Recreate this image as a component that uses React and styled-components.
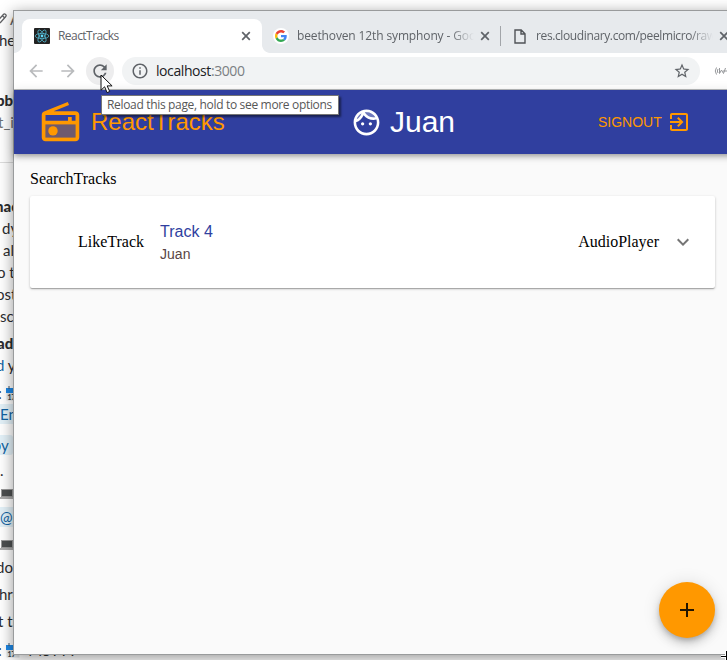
import React from "react";
import styled, { createGlobalStyle } from "styled-components";

const GlobalStyle = createGlobalStyle`
  * { box-sizing: border-box; }
  body { margin: 0; background: #fff; overflow: hidden; }
  svg { display: block; flex: none; }
`;

const Desktop = styled.div`
  position: relative;
  width: 727px;
  height: 660px;
  overflow: hidden;
  background: #fff;
`;

/* Chat page that lies behind the browser window */
const ChatColumn = styled.div`
  display: flex;
  flex-direction: column;
  width: 90px;
  font-family: Lato, sans-serif;
  font-size: 15px;
  color: #2c2d30;
`;

const ChatLine = styled.div`
  display: flex;
  align-items: center;
  flex: none;
  height: 20px;
  margin-top: ${(p) => p.$gap}px;
  margin-left: ${(p) => p.$shift || 0}px;
  line-height: 20px;
  white-space: pre;
  font-weight: ${(p) => (p.$bold ? 900 : 400)};
  color: ${(p) => p.$color || "inherit"};
`;

const Mention = styled.span`
  background: #e3f1f8;
  color: #1264a3;
  padding: 0 4px;
  margin-left: -6px;
  border-radius: 3px;
`;

const Faint = styled.span`
  color: #1264a3;
`;

const ChatDivider = styled.div`
  height: 1px;
  flex: none;
  margin: 30px 0 0;
  background: #ddd;
`;

const BrowserWindow = styled.div`
  position: absolute;
  left: 13px;
  top: 10px;
  width: 760px;
  height: 645px;
  display: flex;
  flex-direction: column;
  border: 1px solid #999b9c;
  background: #fafafa;
  box-shadow: 0 3px 14px rgba(0, 0, 0, 0.42);
`;

const TabStrip = styled.div`
  display: flex;
  flex: none;
  height: 42px;
  padding: 8px 0 0 8px;
  background: #e7eaed;
`;

const Tab = styled.div`
  position: relative;
  display: flex;
  align-items: center;
  flex: none;
  width: ${(p) => p.$width}px;
  height: 34px;
  padding-left: ${(p) => p.$pad || 12}px;
  border-radius: 8px 8px 0 0;
  background: ${(p) => (p.$active ? "#fff" : "transparent")};
`;

const Flare = styled.span`
  position: absolute;
  bottom: 0;
  ${(p) => p.$side}: -8px;
  width: 8px;
  height: 8px;
  background: radial-gradient(
    circle at ${(p) => p.$side} top,
    transparent 7.5px,
    #fff 8.2px
  );
`;

const TabTitle = styled.span`
  flex: none;
  width: ${(p) => p.$width}px;
  margin-left: ${(p) => p.$gap}px;
  margin-right: ${(p) => p.$end || 0}px;
  overflow: hidden;
  white-space: nowrap;
  font: 12px/18px "Open Sans", sans-serif;
  letter-spacing: ${(p) => p.$track || 0}px;
  color: #5f6368;
  ${(p) =>
    p.$fade &&
    "mask-image: linear-gradient(to right, #000 calc(100% - 24px), transparent);"}
`;

const TabDivider = styled.span`
  flex: none;
  width: 1px;
  height: 20px;
  margin-top: 7px;
  background: #a2a5a9;
`;

const Toolbar = styled.div`
  display: flex;
  align-items: center;
  flex: none;
  height: 37px;
  padding-left: 12px;
  border-bottom: 1px solid #b9bbbc;
  background: #fff;
`;

const NavIcon = styled.div`
  display: flex;
  width: 18px;
  margin-right: 14px;
`;

const ReloadButton = styled.div`
  display: flex;
  align-items: center;
  justify-content: center;
  width: 28px;
  height: 28px;
  margin-left: -4px;
  border-radius: 50%;
  background: #ededee;
`;

const AddressBar = styled.div`
  display: flex;
  align-items: center;
  width: 578px;
  height: 28px;
  margin: 0 14px 0 8px;
  padding: 0 9px;
  border-radius: 14px;
  background: #f1f3f4;
`;

const Url = styled.span`
  flex: 1;
  margin-left: 7px;
  font: 14px/20px "Open Sans", sans-serif;
  letter-spacing: -0.42px;
  color: #202124;
`;

const Port = styled.span`
  color: #7b7f83;
`;

const AppHeader = styled.header`
  display: flex;
  align-items: center;
  flex: none;
  height: 64px;
  padding-left: 24px;
  background: #303f9f;
  color: #ff9800;
  font-family: "Liberation Sans", Arial, sans-serif;
  box-shadow: 0 2px 4px -1px rgba(0, 0, 0, 0.2),
    0 4px 5px 0 rgba(0, 0, 0, 0.14), 0 1px 10px 0 rgba(0, 0, 0, 0.12);
`;

const Brand = styled.div`
  display: flex;
  align-items: center;
  width: 313px;
  font-size: 24px;
  gap: 8px;
`;

const Profile = styled.div`
  display: flex;
  align-items: center;
  width: 247px;
  gap: 8px;
  font-size: 30px;
  color: #fff;
`;

const SignOut = styled.div`
  display: flex;
  align-items: center;
  gap: 5px;
  font-size: 14px;
`;

const Content = styled.main`
  padding: 16px;
  font: 16px/18px "Liberation Serif", "Times New Roman", serif;
  color: #000;
`;

const TrackCard = styled.div`
  display: flex;
  align-items: center;
  width: 685px;
  height: 92px;
  margin-top: 8px;
  padding: 0 20px 0 48px;
  border-radius: 2px;
  background: #fff;
  box-shadow: 0 1px 3px rgba(0, 0, 0, 0.2), 0 1px 1px rgba(0, 0, 0, 0.14),
    0 2px 1px -1px rgba(0, 0, 0, 0.12);
`;

const TrackInfo = styled.div`
  flex: 1;
  margin-left: 16px;
  font-family: "Liberation Sans", Arial, sans-serif;
`;

const TrackName = styled.div`
  font-size: 16px;
  line-height: 24px;
  color: #303f9f;
`;

const TrackAuthor = styled.div`
  font-size: 14px;
  line-height: 21px;
  color: #5a4544;
`;

const ExpandIcon = styled.div`
  margin-left: 12px;
`;

const AddButton = styled.div`
  position: absolute;
  left: 645px;
  top: 571px;
  width: 56px;
  height: 56px;
  display: flex;
  align-items: center;
  justify-content: center;
  border-radius: 50%;
  background: #ff9800;
  box-shadow: 0 3px 5px -1px rgba(0, 0, 0, 0.2),
    0 6px 10px 0 rgba(0, 0, 0, 0.14), 0 1px 18px 0 rgba(0, 0, 0, 0.12);
`;

const Tooltip = styled.div`
  position: absolute;
  left: 101px;
  top: 95px;
  width: 238px;
  height: 20px;
  padding-left: 5px;
  border: 1px solid #767676;
  background: #fff;
  box-shadow: 2px 2px 2px rgba(0, 0, 0, 0.5);
  font: 12px/18px "Open Sans", sans-serif;
  letter-spacing: -0.33px;
  white-space: nowrap;
  color: #575757;
`;

const Pointer = styled.div`
  position: absolute;
  left: ${(p) => p.$left}px;
  top: ${(p) => p.$top}px;
`;

const Glyph = ({ size = 24, color = "#5f6368", d, children }) => (
  <svg width={size} height={size} viewBox="0 0 24 24" fill={color}>
    <path d={d} />
    {children}
  </svg>
);

const CloseIcon = () => (
  <svg width="10" height="10" viewBox="0 0 10 10" stroke="#5f6368" strokeWidth="1.7">
    <path d="M1.2 1.2l7.6 7.6M8.8 1.2L1.2 8.8" />
  </svg>
);

const ReactLogo = () => (
  <svg width="16" height="16" viewBox="0 0 16 16">
    <rect width="16" height="16" rx="1" fill="#222" />
    <g fill="none" stroke="#53b9d3" strokeWidth="0.75">
      <ellipse cx="8" cy="8" rx="6.8" ry="2.6" />
      <ellipse cx="8" cy="8" rx="6.8" ry="2.6" transform="rotate(60 8 8)" />
      <ellipse cx="8" cy="8" rx="6.8" ry="2.6" transform="rotate(120 8 8)" />
    </g>
    <circle cx="8" cy="8" r="1.4" fill="#61dafb" />
  </svg>
);

const GoogleLogo = () => (
  <svg width="16" height="16" viewBox="0 0 16 16">
    <circle cx="8" cy="8" r="8" fill="#fff" />
    <g transform="translate(2 2) scale(.25)">
      <path fill="#ea4335" d="M24 9.5c3.54 0 6.71 1.22 9.21 3.6l6.85-6.85C35.9 2.38 30.47 0 24 0 14.62 0 6.51 5.38 2.56 13.22l7.98 6.19C12.43 13.72 17.74 9.5 24 9.5z" />
      <path fill="#4285f4" d="M46.98 24.55c0-1.57-.15-3.09-.38-4.55H24v9.02h12.94c-.58 2.96-2.26 5.48-4.78 7.18l7.73 6c4.51-4.18 7.09-10.36 7.09-17.65z" />
      <path fill="#fbbc05" d="M10.53 28.59c-.48-1.45-.76-2.99-.76-4.59s.27-3.14.76-4.59l-7.98-6.19C.92 16.46 0 20.12 0 24c0 3.88.92 7.54 2.56 10.78l7.97-6.19z" />
      <path fill="#34a853" d="M24 48c6.48 0 11.93-2.13 15.89-5.81l-7.73-6c-2.15 1.45-4.92 2.3-8.16 2.3-6.26 0-11.57-4.22-13.47-9.91l-7.98 6.19C6.51 42.62 14.62 48 24 48z" />
    </g>
  </svg>
);

const FileIcon = () => (
  <svg width="12" height="15" viewBox="0 0 12 15" fill="none" stroke="#505357" strokeWidth="1.4">
    <path d="M1 1h6.2L11 4.8V14H1zM7 1v4h4" />
  </svg>
);

const ExtensionIcon = () => (
  <svg width="16" height="10" viewBox="0 0 16 10" fill="none" stroke="#96989b" strokeWidth="1">
    <path d="M2.5 1.5Q0 5 2.5 8.5M4 3q-1.4 2 0 4M5.5 2v5.5l2-3.5 2 3.5 2-5.5M9 5h5" />
  </svg>
);

const PencilIcon = () => (
  <svg width="10" height="12" viewBox="0 0 10 12" fill="none" stroke="#606164" strokeWidth="1.3">
    <path d="M-2 7.5L3.6 1.3Q4.4.5 5.6 1.5t0 2.2L0 10M2.5 2.8l2 2" />
  </svg>
);

const CalendarIcon = () => (
  <svg width="15" height="15" viewBox="0 0 15 15">
    <rect x="0.5" y="4" width="13" height="10.5" fill="#dfe3e5" />
    <path d="M0 2h14v5H0z" fill="#1e88e5" />
    <path d="M3 0v3M8 0v3M12 0v3" stroke="#456" strokeWidth="1" />
    <text x="1.5" y="13.5" fontFamily="Lato" fontSize="7" fontWeight="900" fill="#37474f">17</text>
  </svg>
);

const LaptopIcon = () => (
  <svg width="16" height="12" viewBox="0 0 16 12">
    <path d="M1 1h12v8H1z" fill="#999" />
    <path d="M2 2h10v6H2z" fill="#4c4f50" />
    <path d="M0 9h15v2H0z" fill="#aaa" />
  </svg>
);

const ArrowCursor = () => (
  <svg width="14" height="20" viewBox="0 0 14 20">
    <path d="M1 1v15.2l3.6-3.4 2.5 5.8 2.6-1.1-2.5-5.6h4.9z" fill="#fff" stroke="#111" strokeWidth="1" />
  </svg>
);

const CrossCursor = () => (
  <svg width="12" height="12" viewBox="0 0 12 12" fill="none">
    <path d="M5.5 0v12M0 5.5h12" stroke="#fff" strokeWidth="3" />
    <path d="M5.5 0v12M0 5.5h12" stroke="#000" strokeWidth="1" />
  </svg>
);

const Chat = () => (
  <ChatColumn>
    <ChatLine $gap={9} $color="#606164"><PencilIcon />A</ChatLine>
    <ChatLine $gap={1} $shift={-1}>he</ChatLine>
    <ChatLine $gap={40} $shift={-4} $bold>pb</ChatLine>
    <ChatLine $gap={2} $shift={-2} $color="#717274">t_i</ChatLine>
    <ChatDivider />
    <ChatLine $gap={33} $shift={-5} $bold>nac</ChatLine>
    <ChatLine $gap={2} $shift={2}>dy</ChatLine>
    <ChatLine $gap={2} $shift={3}>al</ChatLine>
    <ChatLine $gap={2} $shift={-3}>o t</ChatLine>
    <ChatLine $gap={2} $shift={-4}>ost</ChatLine>
    <ChatLine $gap={2}>sc</ChatLine>
    <ChatLine $gap={7} $shift={-3} $bold>ad</ChatLine>
    <ChatLine $gap={2} $shift={-4}><Faint>d</Faint> y</ChatLine>
    <ChatLine $gap={8} $shift={-2}>: <CalendarIcon /></ChatLine>
    <ChatLine $gap={1} $shift={2}><Mention>Enr</Mention></ChatLine>
    <ChatLine $gap={11} $shift={-9}><Mention> by</Mention></ChatLine>
    <ChatLine $gap={5}>.</ChatLine>
    <ChatLine $gap={4}><LaptopIcon /></ChatLine>
    <ChatLine $gap={3} $shift={2}><Mention>@p</Mention></ChatLine>
    <ChatLine $gap={8}><LaptopIcon /></ChatLine>
    <ChatLine $gap={2} $shift={-4}>do</ChatLine>
    <ChatLine $gap={7} $shift={-1}>hro</ChatLine>
    <ChatLine $gap={7} $shift={-2}>t th</ChatLine>
    <ChatLine $gap={9} $shift={-2}>: <CalendarIcon />  MSTTT</ChatLine>
  </ChatColumn>
);

export default function App() {
  return (
    <Desktop>
      <GlobalStyle />
      <Chat />
      <BrowserWindow>
        <TabStrip>
          <Tab $active $width={240}>
            <Flare $side="left" />
            <Flare $side="right" />
            <ReactLogo />
            <TabTitle $gap={8} $width={183} $track={-0.55}>ReactTracks</TabTitle>
            <CloseIcon />
          </Tab>
          <Tab $width={238} $pad={11}>
            <GoogleLogo />
            <TabTitle $gap={8} $width={177} $end={6} $track={-0.13} $fade>beethoven 12th symphony - Google Search</TabTitle>
            <CloseIcon />
          </Tab>
          <TabDivider />
          <Tab $width={240} $pad={13}>
            <FileIcon />
            <TabTitle $gap={10} $width={177} $end={6} $track={-0.38} $fade>res.cloudinary.com/peelmicro/raw/upload</TabTitle>
            <CloseIcon />
          </Tab>
        </TabStrip>
        <Toolbar>
          <NavIcon><Glyph size={20} color="#b9bbbd" d="M20 11H7.83l5.59-5.59L12 4l-8 8 8 8 1.41-1.41L7.83 13H20v-2z" /></NavIcon>
          <NavIcon><Glyph size={20} color="#b9bbbd" d="M12 4l-1.41 1.41L16.17 11H4v2h12.17l-5.58 5.59L12 20l8-8z" /></NavIcon>
          <ReloadButton>
            <Glyph size={20} d="M17.65 6.35C16.2 4.9 14.21 4 12 4c-4.42 0-7.99 3.58-7.99 8s3.57 8 7.99 8c3.73 0 6.84-2.55 7.73-6h-2.08c-.82 2.33-3.04 4-5.65 4-3.31 0-6-2.69-6-6s2.69-6 6-6c1.66 0 3.14.69 4.22 1.78L13 11h7V4l-2.35 2.35z" />
          </ReloadButton>
          <AddressBar>
            <Glyph size={18} d="M11 7h2v2h-2zm0 4h2v6h-2zm1-9C6.48 2 2 6.48 2 12s4.48 10 10 10 10-4.48 10-10S17.52 2 12 2zm0 18c-4.41 0-8-3.59-8-8s3.59-8 8-8 8 3.59 8 8-3.59 8-8 8z" />
            <Url>localhost<Port>:3000</Port></Url>
            <Glyph size={18} d="M22 9.24l-7.19-.62L12 2 9.19 8.63 2 9.24l5.46 4.73L5.82 21 12 17.27 18.18 21l-1.63-7.03L22 9.24zM12 15.4l-3.76 2.27 1-4.28-3.32-2.88 4.38-.38L12 6.1l1.71 4.04 4.38.38-3.32 2.88 1 4.28L12 15.4z" />
          </AddressBar>
          <ExtensionIcon />
        </Toolbar>
        <AppHeader>
          <Brand>
            <Glyph size={45} color="#ff9800" d="M20 6H8.3l8.26-3.34L15.88 1 3.24 6.15C2.51 6.43 2 7.17 2 8v12c0 1.1.89 2 2 2h16c1.1 0 2-.9 2-2V8c0-1.11-.89-2-2-2zm0 14H4v-7h16v7zm0-9h-2V9h-2v2H4V8h16v3z">
              <path fillOpacity="0.3" d="M4 20h16v-7H4z" />
              <circle cx="8" cy="16.48" r="2.5" />
            </Glyph>
            ReactTracks
          </Brand>
          <Profile>
            <Glyph size={31} color="#fff" d="M10.25 13c0 .69-.56 1.25-1.25 1.25S7.75 13.69 7.75 13s.56-1.25 1.25-1.25 1.25.56 1.25 1.25zM15 11.75c-.69 0-1.25.56-1.25 1.25s.56 1.25 1.25 1.25 1.25-.56 1.25-1.25-.56-1.25-1.25-1.25zM12 2C6.48 2 2 6.48 2 12s4.48 10 10 10 10-4.48 10-10S17.52 2 12 2zm0 2c2.9 0 5.44 1.56 6.84 3.88-.43.07-.88.12-1.34.12-2.9 0-5.44-1.56-6.84-3.88.43-.07.88-.12 1.34-.12zM8.08 5.03C7.45 6.92 6.13 8.5 4.42 9.47 5.05 7.58 6.37 6 8.08 5.03zM12 20c-4.41 0-8-3.59-8-8 0-.05.01-.1 0-.14 2.6-.98 4.69-2.99 5.74-5.55 1.84 2.25 4.63 3.69 7.76 3.69.75 0 1.47-.09 2.17-.24.21.71.33 1.46.33 2.24 0 4.41-3.59 8-8 8z">
              <path fillOpacity="0.3" d="M17.5 8c.46 0 .91-.05 1.34-.12C17.44 5.56 14.9 4 12 4c-.46 0-.91.05-1.34.12C12.06 6.44 14.6 8 17.5 8zM8.08 5.03C6.37 6 5.05 7.58 4.42 9.47c1.71-.97 3.03-2.55 3.66-4.44z" />
            </Glyph>
            Juan
          </Profile>
          <SignOut>
            SIGNOUT
            <Glyph color="#ff9800" d="M10.09 15.59L11.5 17l5-5-5-5-1.41 1.41L12.67 11H3v2h9.67l-2.58 2.59zM19 3H5c-1.11 0-2 .9-2 2v4h2V5h14v14H5v-4H3v4c0 1.1.89 2 2 2h14c1.1 0 2-.9 2-2V5c0-1.1-.9-2-2-2z" />
          </SignOut>
        </AppHeader>
        <Content>
          SearchTracks
          <TrackCard>
            LikeTrack
            <TrackInfo>
              <TrackName>Track 4</TrackName>
              <TrackAuthor>Juan</TrackAuthor>
            </TrackInfo>
            AudioPlayer
            <ExpandIcon>
              <Glyph color="#757575" d="M16.59 8.59L12 13.17 7.41 8.59 6 10l6 6 6-6z" />
            </ExpandIcon>
          </TrackCard>
        </Content>
        <AddButton><Glyph color="#211400" d="M19 13h-6v6h-2v-6H5v-2h6V5h2v6h6v2z" /></AddButton>
      </BrowserWindow>
      <Tooltip>Reload this page, hold to see more options</Tooltip>
      <Pointer $left={100} $top={74}><ArrowCursor /></Pointer>
      <Pointer $left={721} $top={651}><CrossCursor /></Pointer>
    </Desktop>
  );
}
